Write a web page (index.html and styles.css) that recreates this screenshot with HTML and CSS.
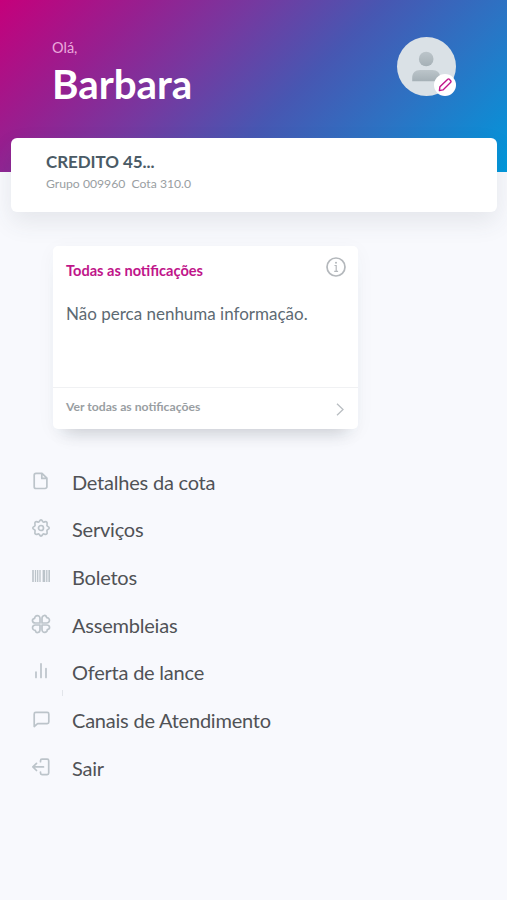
FILE: index.html
```html
<!DOCTYPE html>
<html lang="pt-BR">
<head>
<meta charset="utf-8">
<title>Consórcio</title>
<link rel="stylesheet" href="styles.css">
</head>
<body>
<header class="hero">
  <div class="greeting">
    <p class="hello">Olá,</p>
    <h1 class="name">Barbara</h1>
  </div>
  <div class="avatar">
    <svg class="person" viewBox="0 0 59 59">
      <defs>
        <linearGradient id="tone" x1="0" y1="0" x2="0" y2="1">
          <stop offset="0" stop-color="#bcc5ca"/><stop offset="1" stop-color="#a5b0b6"/>
        </linearGradient>
      </defs>
      <circle cx="29.2" cy="22" r="7.3" fill="url(#tone)"/>
      <path d="M15.2 44.3v-3.600c0-5 3-7.800 7.800-7.800h12.400c4.800 0 7.800 2.800 7.800 7.800v3.600z" fill="url(#tone)"/>
    </svg>
    <span class="edit">
      <svg viewBox="0 0 22 22" fill="none" stroke="#c0158a" stroke-width="1.400" stroke-linejoin="round">
        <path d="M5.400 16.600l.5-3.800 7.600-7.400c.7-.7 1.400-.7 2 0l1 1c.7.7.7 1.400 0 2.100L9 15.900z"/>
      </svg>
    </span>
  </div>
</header>
<section class="quota">
  <h2 class="quota-title">CREDITO 45...</h2>
  <p class="quota-info">Grupo 009960&nbsp; Cota 310.0</p>
</section>
<section class="notice">
  <div class="notice-head">
    <h3 class="notice-title">Todas as notificações</h3>
    <svg class="info" viewBox="0 0 20 20" fill="none" stroke="#b4b8bc" stroke-width="1.700">
      <circle cx="10" cy="10" r="9"/>
      <path d="M8.500 8.500h1.700v5.700M8.200 14.300h3.900" stroke-width="1.200"/>
      <circle cx="10" cy="5.700" r="1" fill="#b4b8bc" stroke="none"/>
    </svg>
  </div>
  <p class="notice-text">Não perca nenhuma informação.</p>
  <div class="notice-link">
    <span class="link-text">Ver todas as notificações</span>
    <svg class="chevron" viewBox="0 0 8 13" fill="none" stroke="#b9bec2" stroke-width="1.300"><path d="M1 .8l6 5.700-6 5.700"/></svg>
  </div>
</section>
<nav class="menu">
  <a class="item"><svg class="icon" viewBox="0 0 20 20"><path d="M5 2.400h6l4.900 4.800v8.500a1.800 1.800 0 0 1-1.800 1.800H5a1.800 1.800 0 0 1-1.800-1.800V4.200A1.800 1.800 0 0 1 5 2.400zM10.800 2.600V7.400h4.800"/></svg><span>Detalhes da cota</span></a>
  <a class="item"><svg class="icon" viewBox="0 0 20 20"><path d="M8.300 3.500Q10 .3 11.700 3.500Q12.300 4.300 13.400 3.900Q16.800 2.900 16 6.400Q15.600 7.500 16.500 8.300Q20 10 16.500 11.700Q15.600 12.500 16 13.600Q16.800 17.100 13.400 16.100Q12.300 15.700 11.700 16.500Q10 19.700 8.300 16.500Q7.700 15.700 6.600 16.100Q3.200 17.100 4 13.600Q4.400 12.500 3.500 11.700Q0 10 3.500 8.300Q4.400 7.500 4 6.400Q3.200 2.900 6.600 3.900Q7.700 4.300 8.300 3.500z"/><circle cx="10" cy="10" r="2.500"/></svg><span>Serviços</span></a>
  <a class="item"><svg class="icon barcode" viewBox="0 0 20 20"><path d="M2 4v12M18.200 4v12" stroke-width="1.600"/><path d="M4.500 4v12M6.700 4v12M9 4v12M15.800 4v12" stroke-width="1.300"/><path d="M12.900 4v12" stroke-width="2.600"/></svg><span>Boletos</span></a>
  <a class="item"><svg class="icon" viewBox="0 0 20 20"><g id="leaf"><path d="M9 9H4.500C.8 9 .4 4.900 3.700 4.300 3.600.8 9 .4 9 4.500z"/></g><use href="#leaf" transform="rotate(90 10 10)"/><use href="#leaf" transform="rotate(180 10 10)"/><use href="#leaf" transform="rotate(270 10 10)"/></svg><span>Assembleias</span></a>
  <a class="item marked"><svg class="icon" viewBox="0 0 20 20"><path d="M5 11v5.500M10 2.800V16.500M15 7.500v9"/></svg><span>Oferta de lance</span></a>
  <a class="item"><svg class="icon" viewBox="0 0 20 20"><path d="M4.700 3.400h11.600a1.500 1.500 0 0 1 1.500 1.500v8.200a1.500 1.500 0 0 1-1.500 1.500H6.600l-3.400 2.900V4.900a1.500 1.500 0 0 1 1.500-1.500z"/></svg><span>Canais de Atendimento</span></a>
  <a class="item"><svg class="icon" viewBox="0 0 20 20"><path d="M9.500 4.700V3.700a1.500 1.500 0 0 1 1.500-1.500h5.200a1.500 1.500 0 0 1 1.500 1.500v12.400a1.500 1.500 0 0 1-1.500 1.500H11a1.500 1.500 0 0 1-1.500-1.500v-1M12.500 9.900H2M5.500 6.300L1.900 9.900l3.600 3.600"/></svg><span>Sair</span></a>
</nav>
</body>
</html>
```

FILE: styles.css
```css
* { box-sizing: border-box; margin: 0; }
body {
  height: 900px;
  overflow: hidden;
  background: #f8f9fd;
  font-family: Lato, "Liberation Sans", sans-serif;
  color: #505256;
}
svg { display: block; }
.hero {
  display: flex;
  justify-content: space-between;
  height: 172px;
  padding: 37px 51px 0 52px;
  background: linear-gradient(135deg, #c5007b 0%, #962090 22%, #7539a0 38%, #4757b2 57%, #2b74c4 76%, #0098dc 100%);
}
.hello { margin-top: 2px; font-size: 14.5px; line-height: 17px; color: #eba9dc; }
.name { margin-top: 4px; font-size: 40.3px; line-height: 48px; font-weight: 700; color: #fff; }
.avatar { position: relative; width: 59px; height: 59px; border-radius: 50%; background: #dae1e6; }
.person { width: 59px; height: 59px; }
.edit { position: absolute; right: 0; bottom: 0; width: 22px; height: 22px; border-radius: 50%; background: #fff; }
.quota {
  position: relative;
  height: 74px;
  margin: -34px 10px 0 11px;
  padding: 14px 35px;
  border-radius: 6px;
  background: #fff;
  box-shadow: 0 10px 24px rgba(60, 70, 80, .1);
}
.quota-title { font-size: 17px; line-height: 20px; font-weight: 700; letter-spacing: -.08px; color: #4b5b66; }
.quota-info { margin-top: 4px; font-size: 12.2px; line-height: 15px; color: #999ea2; }
.notice {
  display: flex;
  flex-direction: column;
  width: 305px;
  height: 183px;
  margin: 34px 0 0 53px;
  border-radius: 5px;
  background: #fff;
  box-shadow: 0 16px 16px -12px rgba(60, 70, 80, .22), 0 4px 20px rgba(60, 70, 80, .04);
}
.notice-head { display: flex; justify-content: space-between; padding: 11px 12px 0 13px; }
.notice-title { margin-top: 5px; font-size: 14.6px; line-height: 18px; font-weight: 700; color: #c0158a; }
.info { width: 20px; height: 20px; }
.notice-text { margin: 23px 0 0 13px; font-size: 17px; line-height: 21px; color: #5d6a73; }
.notice-link {
  display: flex;
  justify-content: space-between;
  height: 42px;
  margin-top: auto;
  padding: 11px 14px 0 13px;
  border-top: 1px solid #f0f1f3;
}
.link-text { font-size: 12.2px; line-height: 15px; font-weight: 700; color: #999ea2; }
.chevron { width: 8px; height: 13px; margin-top: 4px; }
.menu { margin-top: 29px; padding-left: 31px; }
.item { position: relative; display: flex; align-items: center; gap: 21px; height: 47.65px; font-size: 20px; line-height: 24px; letter-spacing: -.22px; }
.icon {
  width: 20px;
  height: 20px;
  margin-top: -2px;
  fill: none;
  stroke: #bcc4ca;
  stroke-width: 1.7;
  stroke-linecap: round;
  stroke-linejoin: round;
}
.barcode { stroke-linecap: butt; }
.marked::after {
  content: "";
  position: absolute;
  left: 31px;
  bottom: 0;
  width: 1px;
  height: 6px;
  background: #e2e5ea;
}
```
